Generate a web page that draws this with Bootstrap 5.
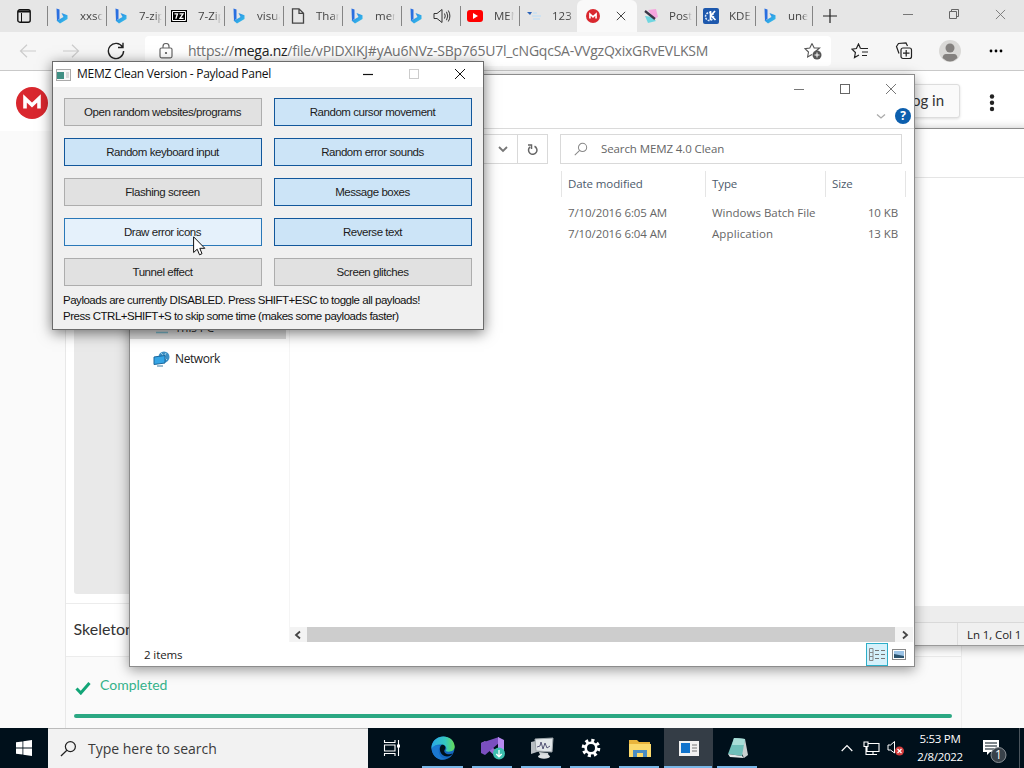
<!DOCTYPE html>
<html lang="en">
<head>
<meta charset="utf-8">
<title>Desktop</title>
<link rel="stylesheet" href="https://cdn.jsdelivr.net/npm/bootstrap@5.3.0/dist/css/bootstrap.min.css">
<script src="https://cdn.jsdelivr.net/npm/bootstrap@5.3.0/dist/js/bootstrap.bundle.min.js"></script>
<style>
body{width:1024px;height:768px;overflow:hidden;background:#fafafa;font-family:"Open Sans","Noto Sans",sans-serif;font-size:11.5px;line-height:16px;color:#222}
svg{display:block;flex:none}
.desk{width:1024px;height:768px}
.win{position:absolute;overflow:hidden}
/* browser */
.tabs{height:32px;background:#e6e6e6}
.tabs .lead-ico{width:47px;padding-left:17px}
.tab{width:59px;height:32px;padding-left:8px;gap:8px;position:relative}
.tab::before{content:"";width:1px;height:20px;background:#858585;position:absolute;left:0;top:6px}
.tab span{width:23px;overflow:hidden;white-space:nowrap;color:#444;margin-left:3px;-webkit-mask-image:linear-gradient(90deg,#000 70%,transparent)}
.tab.live{width:60px;background:#f9f9f9;border-radius:6px 6px 0 0;gap:17px;padding-left:9px}
.tab.bare::before,.tab.live::before{display:none}
.caps{gap:32px;color:#777}
.tools{height:39px;background:#f6f6f6;border-bottom:1px solid #c9c9c9}
.addr{width:686px;height:30px;background:#fff;border-radius:4px;margin-left:20px;padding-left:14px}
.url{font-size:14px;color:#717171;margin-left:15px;letter-spacing:-.23px;white-space:nowrap}
.url b{font-weight:400;color:#222}
/* site */
.site-head{height:60px;background:#fff}
.login{width:70px;height:34px;border:1px solid #ddd;border-radius:3px;background:#fafafa;font-family:Lato,"Open Sans",sans-serif;box-shadow:0 1px 3px #0002;font-size:15px;line-height:14px;color:#333}
.page{margin-left:65px;width:897px;height:597px;border-left:1px solid #e8e8e8;border-right:1px solid #eee;background:#fff}
.preview{margin-left:8px;width:880px;height:463px;background:#e9e9e9;border-radius:0 0 3px 3px}
.filename{margin-top:9px;height:53px;border-top:1px solid #ececec;font-family:Lato,sans-serif;font-size:16px;color:#333;padding:0 0 2px 7.5px}
.done{height:72px;border-top:1px solid #ececec;background:#fafafa;font-family:Lato,sans-serif;font-size:14px;color:#34b28a}
.bar{width:878px;height:4px;border-radius:2px;background:#2ba883;margin-left:8px}
/* notepad */
.notepad{left:700px;top:128px;width:330px;height:518px;background:#fff;border:1px solid #9a9a9a;border-top:1px solid #8c8c8c;box-shadow:0 2px 10px #0005}
.notepad .stat{height:23px;background:#f0f0f0;border-top:1px solid #d9d9d9}
/* explorer */
.explorer{left:129px;top:74px;width:786px;height:593px;background:#fff;border:1px solid #8c8c8c;box-shadow:0 3px 12px #0006}
.ribbon{height:54px;border-bottom:1px solid #dadada}
.box{height:30px;border:1px solid #d9d9d9}
.grey{color:#666}
.heads>div{border-left:1px solid #e5e5e5;height:26px;padding-left:6px;line-height:25px;color:#4c5a6b}
.c1{width:144px}.c2{width:120px}.c3{width:80px}
.rows>div{height:21px;line-height:21px}
.rows .c1,.rows .c2{padding-left:7px}
.seg{letter-spacing:-.1px}
/* panel */
.panel{left:52px;top:61px;width:432px;height:269px;background:#f0f0f0;border:1px solid #6b6b6b;box-shadow:0 3px 13px #0008}
.panel .cap{height:25px;background:#fff;color:#111;font-size:12px;letter-spacing:-.27px}
.pgrid{display:grid;grid-template-columns:198px 198px;column-gap:12px;row-gap:12px;padding:11px 0 0 11px}
.pay{height:28px;border:1px solid #adadad;background:#e1e1e1;font:11.5px/26px "Liberation Sans",sans-serif;letter-spacing:-.45px;text-align:center;padding:0 1px 0 0;color:#1c1c1c;border-radius:0}
.pay.on{background:#cce4f7;border-color:#12579b}
.pay.hot{background:#e5f1fb;border-color:#2a78b8}
.note{font:11.5px/16px "Liberation Sans",sans-serif;letter-spacing:-.48px;padding:6px 0 0 10px;color:#111;white-space:nowrap}
/* taskbar */
.task{left:0;top:728px;width:1024px;height:40px;background:#00101b;color:#fff}
.find{width:320px;height:40px;background:#f2f2f2;border-top:1px solid #bbb;color:#3b3b3b;font-size:14px}
.app{width:49px;height:40px;position:relative}
.app.run::after{content:"";position:absolute;left:4px;right:5px;bottom:0;height:2px;background:#79b7e8}
.app.sel{background:#343d46}
.app.sel::after{left:0;right:1px}
</style>
</head>
<body>
<svg width="0" height="0" class="position-absolute">
<defs>
<linearGradient id="bg" x1="0" y1="0" x2="1" y2="1"><stop offset="0" stop-color="#2b7be4"/><stop offset="1" stop-color="#35c8ea"/></linearGradient>
<symbol id="bing" viewBox="0 0 14 16"><path d="M1.500 0.500L4.500 1.600V10.500L2 13.200Z" fill="#2a6fe0"/><path d="M1.500 12.500L5 11L8.500 9L6.500 5L12.500 7.300V11L5 15.500Z" fill="url(#bg)"/></symbol>
<symbol id="x" viewBox="0 0 12 12"><path d="M1 1L11 11M11 1L1 11" fill="none" stroke="currentColor"/></symbol>
<symbol id="mega" viewBox="0 0 32 32"><circle cx="16" cy="16" r="16" fill="#d9272e"/><path d="M9 21.500V11.500L16 18L23 11.500V21.500" fill="none" stroke="#fff" stroke-width="3.600"/></symbol>
<symbol id="lens" viewBox="0 0 18 18"><circle cx="11" cy="7" r="5.300" fill="none" stroke="currentColor" stroke-width="1.300"/><path d="M7.300 10.800L1 17" stroke="currentColor" stroke-width="1.300"/></symbol>
</defs></svg>
<div class="desk position-relative overflow-hidden">

<div class="tabs d-flex align-items-center">
 <div class="lead-ico"><svg width="14" height="14" viewBox="0 0 14 14"><rect x=".8" y=".8" width="12.400" height="12.400" rx="2" fill="none" stroke="#111" stroke-width="1.400"/><path d="M1 2.500H13" stroke="#111" stroke-width="2"/><path d="M4.500 4V13" stroke="#111"/></svg></div>
 <div class="tab d-flex align-items-center"><svg width="14" height="16"><use href="#bing"/></svg><span>xxsc</span></div>
 <div class="tab d-flex align-items-center"><svg width="14" height="16"><use href="#bing"/></svg><span>7-zip</span></div>
 <div class="tab d-flex align-items-center"><svg width="16" height="12" viewBox="0 0 16 12" style="margin-left:-2px"><rect width="16" height="12"/><path d="M1.500 1.500H14.500V10.500H1.500Z" fill="none" stroke="#fff"/><path d="M3.500 3.800H6.500L4.800 8.800M8.500 3.800H12L9 8.300H12.500" fill="none" stroke="#fff" stroke-width="1.300"/></svg><span>7-Zip</span></div>
 <div class="tab d-flex align-items-center"><svg width="14" height="16"><use href="#bing"/></svg><span>visua</span></div>
 <div class="tab d-flex align-items-center"><svg width="14" height="16" viewBox="0 0 14 16"><path d="M1.500 .8H8L12.500 5.300V15.200H1.500ZM8 .8V5.300H12.500" fill="none" stroke="#444" stroke-width="1.300"/></svg><span>Than</span></div>
 <div class="tab d-flex align-items-center"><svg width="14" height="16"><use href="#bing"/></svg><span style="width:20px">mem</span></div>
 <div class="tab d-flex align-items-center"><svg width="14" height="16"><use href="#bing"/></svg><svg width="18" height="16" viewBox="0 0 18 16" style="margin-left:2px"><path d="M1 5.500H4L9 1.500V14.500L4 10.500H1ZM11.500 5.500Q13 8 11.500 10.500M13.500 3.800Q16 8 13.500 12.200M15.300 2.500Q18.500 8 15.300 13.500" fill="none" stroke="#333"/></svg></div>
 <div class="tab d-flex align-items-center"><svg width="16" height="12" viewBox="0 0 16 12" style="margin-left:-1px"><rect width="16" height="12" rx="3" fill="#f00"/><path d="M6 3L11 6L6 9Z" fill="#fff"/></svg><span style="width:20px">MEM</span></div>
 <div class="tab d-flex align-items-center" style="width:58px"><svg width="14" height="14" viewBox="0 0 14 14"><path d="M0 3H5L3 6Z" fill="#2a62b8"/><path d="M6 4H10M5 7H14M6 10H13" stroke="#cfe2f0" stroke-width="2"/></svg><span>123</span></div>
 <div class="tab live d-flex align-items-center"><svg width="14" height="14"><use href="#mega"/></svg><svg width="10" height="10" style="color:#222;margin-left:-1px"><use href="#x" width="10" height="10"/></svg></div>
 <div class="tab bare d-flex align-items-center" style="padding-left:7px"><svg width="14" height="16" viewBox="0 0 14 16"><path d="M4 2L12 1L14 9L10 11Z" fill="#f5a4dd"/><path d="M1 8L8 9L12 13L4 15Z" fill="#6fd6e0"/><path d="M1 3L11 11" stroke="#3a3546" stroke-width="2.300"/></svg><span>Post</span></div>
 <div class="tab d-flex align-items-center"><svg width="16" height="16" viewBox="0 0 16 16" style="margin-left:-1px"><rect width="16" height="16" rx="2" fill="#1d58ad"/><circle cx="6.500" cy="8.500" r="4" fill="none" stroke="#dbe9fa" stroke-width="1.500" stroke-dasharray="2 1"/><path d="M7.500 3V12M12 3L8 7.500L12.500 12" fill="none" stroke="#fff" stroke-width="1.700"/></svg><span style="margin-left:2px">KDE</span></div>
 <div class="tab d-flex align-items-center" style="width:57px"><svg width="14" height="16"><use href="#bing"/></svg><span style="width:20px">unet</span></div>
 <div class="tab d-flex align-items-center" style="width:30px;padding-left:11px"><svg width="14" height="14" viewBox="0 0 14 14"><path d="M7 0V14M0 7H14" stroke="#222" stroke-width="1.200"/></svg></div>
 <div class="caps d-flex align-items-center ms-auto" style="padding:0 18px 4px 0;gap:36px"><svg width="10" height="10"><path d="M0 5.500H10" stroke="#777"/></svg><svg width="10" height="10" viewBox="0 0 10 10"><path d="M.5 2.500H7.500V9.500H.5ZM2.500 2.500V.5H9.500V7.500H7.500" fill="none" stroke="#666"/></svg><svg width="11" height="11"><use href="#x" width="11" height="11"/></svg></div>
</div>

<div class="tools d-flex align-items-center">
 <svg width="18" height="14" viewBox="0 0 18 14" style="margin-left:19px"><path d="M17 7H1.500M8 .8L1.500 7L8 13.200" fill="none" stroke="#ccc" stroke-width="1.200"/></svg>
 <svg width="18" height="14" viewBox="0 0 18 14" style="margin-left:25px"><path d="M1 7H16.500M10 .8L16.500 7L10 13.200" fill="none" stroke="#ccc" stroke-width="1.200"/></svg>
 <svg width="18" height="18" viewBox="0 0 18 18" style="margin-left:27px"><path d="M15.500 5A7.600 7.600 0 1 0 16.600 9M16 .8V5.500H11" fill="none" stroke="#222" stroke-width="1.400"/></svg>
 <div class="addr d-flex align-items-center"><svg width="14" height="16" viewBox="0 0 14 16"><rect x="1" y="5" width="12" height="9.800" rx="1.500" fill="none" stroke="#666" stroke-width="1.200"/><path d="M4 5V3.500A3 3 0 0 1 10 3.500V5" fill="none" stroke="#666" stroke-width="1.200"/><circle cx="7" cy="10" r="1.100" fill="#555"/></svg><span class="url">https://<b>mega.nz</b>/file/vPIDXIKJ#yAu6NVz-SBp765U7l_cNGqcSA-VVgzQxixGRvEVLKSM</span>
 <svg width="18" height="18" viewBox="0 0 18 18" class="ms-auto" style="margin-right:9px"><path d="M8 1.500L10.200 6H15.500L11.500 9.500M8 1.500L5.800 6L1 6.600L4.500 10L3.600 15L8 12.600" fill="none" stroke="#555" stroke-width="1.100"/><circle cx="13" cy="13" r="4.500" fill="#555"/><path d="M13 10.500V15.500M10.500 13H15.500" stroke="#fff"/></svg></div>
 <svg width="18" height="16" viewBox="0 0 18 16" style="margin-left:20px"><path d="M9.500 5.500L7.500 1L5.400 5.500L1 6.200L4.400 9.500L3.500 14.500L8 12M9.500 5.500H17M11 9H17M11 12.500H16" fill="none" stroke="#222" stroke-width="1.200"/></svg>
 <svg width="18" height="18" viewBox="0 0 18 18" style="margin-left:26px"><path d="M4 11.500L1.500 4.500L3.500 1.500L11 1L12.500 4" fill="none" stroke="#222" stroke-width="1.200"/><rect x="6" y="6" width="10.500" height="10.500" rx="2" fill="none" stroke="#222" stroke-width="1.200"/><path d="M11.200 8V14.500M8 11.200H14.500" stroke="#222" stroke-width="1.200"/></svg>
 <svg width="22" height="22" viewBox="0 0 22 22" style="margin-left:26px"><circle cx="11" cy="11" r="11" fill="#dad9d7"/><circle cx="11" cy="8" r="4.500" fill="#84817f"/><path d="M3.500 18Q4 14 7 14H15Q18 14 18.500 18Q11 25 3.500 18Z" fill="#84817f"/></svg>
 <svg width="14" height="4" style="margin-left:28px"><circle cx="2" cy="2" r="1.400"/><circle cx="7" cy="2" r="1.400"/><circle cx="12" cy="2" r="1.400"/></svg>
</div>

<div class="site-head d-flex align-items-center">
 <svg width="32" height="32" style="margin:3px 0 0 16px"><use href="#mega"/></svg>
 <div class="login d-flex align-items-center justify-content-end ms-auto" style="padding:0 15px 2px 0">Log in</div>
 <svg width="6" height="18" style="margin:4px 29px 0 29px" fill="#222"><circle cx="3" cy="2.500" r="2.200"/><circle cx="3" cy="8.800" r="2.200"/><circle cx="3" cy="15" r="2.200"/></svg>
</div>
<div class="page"><div class="preview"></div>
 <div class="filename d-flex align-items-center">Skeleton.zip</div>
 <div class="done d-flex flex-column"><div class="d-flex" style="padding:20px 0 0 9px"><svg width="16" height="14" viewBox="0 0 16 14" style="margin-top:4px"><path d="M1.500 7.500L5.800 12L14.500 2" fill="none" stroke="#12a577" stroke-width="3"/></svg><span style="margin-left:9px">Completed</span></div>
 <div class="bar" style="margin-top:19px"></div></div></div>

<div class="win notepad d-flex flex-column">
 <div style="height:49px;border-bottom:1px solid #e5e5e5"></div><div class="flex-fill"></div>
 <div style="height:16px;background:#ededed"></div>
 <div class="stat d-flex align-items-center"><div style="border-left:1px solid #ddd;margin-left:256px;padding-left:9px;height:22px;line-height:24px;white-space:nowrap" class="seg">Ln 1, Col 1</div></div>
</div>

<div class="win explorer d-flex flex-column">
 <div class="ribbon d-flex flex-column align-items-end">
  <div class="d-flex align-items-center" style="gap:34px;padding:8px 17px 0 0;color:#777"><svg width="12" height="12"><path d="M1 6.500H11" stroke="#777"/></svg><svg width="12" height="12"><rect x="1.500" y="1.500" width="9" height="9" fill="none" stroke="#666"/></svg><svg width="12" height="12"><use href="#x" width="12" height="12"/></svg></div>
  <div class="d-flex align-items-center" style="gap:9px;padding:13px 3px 0 0"><svg width="10" height="7" viewBox="0 0 10 7"><path d="M1 1.500L5 5L9 1.500" fill="none" stroke="#aaa" stroke-width="1.300"/></svg><span class="rounded-circle d-flex align-items-center justify-content-center text-white fw-bold" style="width:16px;height:16px;background:#0c5fae;font-size:12px">?</span></div>
 </div>
 <div class="d-flex justify-content-end" style="padding:5px 12px 0 0">
  <div class="box d-flex align-items-center" style="width:260px"><svg width="10" height="7" viewBox="0 0 10 7" style="margin-left:209px"><path d="M1 1L5 5L9 1" fill="none" stroke="#777" stroke-width="1.800"/></svg><div style="border-left:1px solid #d9d9d9;height:28px;margin-left:9px;padding:8px 0 0 9px"><svg width="12" height="12" viewBox="0 0 12 12"><path d="M7.500 2.800A4.200 4.200 0 1 1 3 3.400M1 1.500H4.500V5.500" transform="translate(0 .5)" fill="none" stroke="#666" stroke-width="1.500"/></svg></div></div>
  <div class="box d-flex align-items-center grey" style="width:342px;margin-left:12px"><svg width="14" height="14" viewBox="0 0 18 18" style="margin-left:13px;color:#888"><use href="#lens"/></svg><span style="margin-left:13px" class="seg">Search MEMZ 4.0 Clean</span></div>
 </div>
 <div class="d-flex flex-fill">
  <div style="width:160px;padding-top:153px;border-right:1px solid #f5f5f5">
   <div class="d-flex align-items-center" style="height:22px;width:156px;background:#d9d9d9;padding-left:24px;margin-bottom:9px"><svg width="16" height="14" viewBox="0 0 16 14"><path d="M1 1H15V9H1Z" fill="#58b8e0"/><path d="M2 11.500H14" stroke="#7bb7c9" stroke-width="1.500"/></svg><span style="margin-left:5px">This PC</span></div>
   <div class="d-flex align-items-center" style="height:22px;padding-left:23px"><svg width="17" height="16" viewBox="0 0 17 16"><circle cx="11" cy="6" r="5.500" fill="#3c8fc4"/><path d="M8 2Q12 5 10 11M13 2Q10 6 14 9" stroke="#a8d4e8" fill="none"/><path d="M1 6L12 4.500V12L1 13.500Z" fill="#35a5e5" stroke="#1a679c"/><path d="M4 15H10" stroke="#3b7aa0"/></svg><span style="margin-left:5px;font-size:12px;letter-spacing:-.4px">Network</span></div>
  </div>
  <div class="flex-fill d-flex flex-column">
   <div style="margin-left:271px;padding-top:7px">
    <div class="heads d-flex seg"><div class="c1">Date modified</div><div class="c2">Type</div><div class="c3">Size</div><div></div></div>
    <div class="rows grey seg" style="padding-top:5px"><div class="d-flex"><div class="c1">7/10/2016 6:05 AM</div><div class="c2" style="letter-spacing:0">Windows Batch File</div><div class="text-end" style="width:73px">10 KB</div></div><div class="d-flex"><div class="c1">7/10/2016 6:04 AM</div><div class="c2" style="letter-spacing:.1px">Application</div><div class="text-end" style="width:73px">13 KB</div></div></div>
   </div>
   <div class="d-flex align-items-center mt-auto" style="height:15px;background:#f3f3f3;margin-right:1px"><svg width="17" height="10" viewBox="0 0 17 10"><path d="M10 1.500L6 5L10 8.500" fill="none" stroke="#444" stroke-width="1.800"/></svg><div style="width:588px;height:15px;background:#cdcdcd"></div><svg width="17" height="10" viewBox="0 0 17 10"><path d="M8 1.500L12 5L8 8.500" fill="none" stroke="#444" stroke-width="1.800"/></svg></div>
  </div>
 </div>
 <div class="d-flex align-items-center" style="height:24px;padding-left:14px"><span class="seg" style="padding-top:2px">2 items</span>
  <span class="ms-auto d-flex align-items-center justify-content-center" style="width:22px;height:23px;background:#d5f1fb;border:1px solid #2eaec8;margin-right:4px"><svg width="16" height="13" viewBox="0 0 16 13"><path d="M.5 .5H4V12.500H.5ZM.5 4.500H4M.5 8.500H4" fill="none" stroke="#888"/><path d="M6 2.500H16M6 6.500H16M6 10.500H16" stroke="#777" stroke-dasharray="4 2"/></svg></span>
  <svg width="14" height="11" viewBox="0 0 14 11" style="margin-right:8px"><rect x=".5" y=".5" width="13" height="10" fill="#fff" stroke="#888"/><path d="M2 2H12V9H2Z" fill="#9bc3e6"/><path d="M2 5L7 6L12 7V9H2Z" fill="#2b536e"/></svg></div>
</div>

<div class="win panel">
 <div class="cap d-flex align-items-center">
  <svg width="15" height="12" viewBox="0 0 15 12" style="margin-left:3px"><rect x=".5" y=".5" width="14" height="11" fill="#f7f7f7" stroke="#aaa"/><path d="M1 3H8V10H1Z" fill="#3f8f83"/><path d="M10 4H13M10 6H13M10 8H13" stroke="#bbb"/></svg>
  <span style="margin:-2px 0 0 6px">MEMZ Clean Version - Payload Panel</span>
  <div class="d-flex align-items-center ms-auto" style="gap:34px;padding:0 17px 2px 0"><svg width="12" height="12"><path d="M1 6.500H11" stroke="#111" stroke-width="1.200"/></svg><svg width="12" height="12"><rect x="1.500" y="1.500" width="9" height="9" fill="none" stroke="#ccc"/></svg><svg width="12" height="12"><use href="#x" width="12" height="12"/></svg></div>
 </div>
 <div class="pgrid">
  <button class="btn pay">Open random websites/programs</button><button class="btn pay on">Random cursor movement</button>
  <button class="btn pay on">Random keyboard input</button><button class="btn pay on">Random error sounds</button>
  <button class="btn pay">Flashing screen</button><button class="btn pay on">Message boxes</button>
  <button class="btn pay hot">Draw error icons</button><button class="btn pay on">Reverse text</button>
  <button class="btn pay">Tunnel effect</button><button class="btn pay">Screen glitches</button>
 </div>
 <div class="note"><div>Payloads are currently DISABLED. Press SHIFT+ESC to toggle all payloads!</div><div>Press CTRL+SHIFT+S to skip some time (makes some payloads faster)</div></div>
</div>
<svg class="position-absolute" style="left:193px;top:236px" width="13" height="20" viewBox="0 0 13 20"><path d="M.6 .8V16.500L4.200 13.200L6.500 18.800L9 17.700L6.800 12.300H11.800Z" fill="#fff" stroke="#111"/></svg>

<div class="win task d-flex">
 <div class="d-flex align-items-center justify-content-center" style="width:48px"><svg width="16" height="16" viewBox="0 0 16 16" fill="#fff"><path d="M0 2.300L6.500 1.400V7.500H0ZM7.300 1.200L16 0V7.500H7.300ZM0 8.400H6.500V14.600L0 13.700ZM7.300 8.400H16V16L7.300 14.700Z"/></svg></div>
 <div class="find d-flex align-items-center"><svg width="17" height="17" viewBox="0 0 18 18" style="margin-left:12px;color:#222"><use href="#lens"/></svg><span style="margin-left:11px">Type here to search</span></div>
 <div class="app d-flex align-items-center justify-content-center" style="width:50px;padding-right:2px"><svg width="18" height="16" viewBox="0 0 18 16"><path d="M1.500 0V2.500H12V0M1.500 16V13.500H12V16M1.500 5H12V11H1.500ZM15.500 0V16" fill="none" stroke="#fff" stroke-width="1.100"/><rect x="14" y="4.500" width="3" height="3" fill="#fff"/></svg></div>
 <div class="app run d-flex align-items-center justify-content-center" style="width:50px"><svg width="24" height="24" viewBox="0 0 24 24"><defs><linearGradient id="eg"><stop offset="0" stop-color="#2aa8e6"/><stop offset=".6" stop-color="#35c8c0"/><stop offset="1" stop-color="#66dc55"/></linearGradient></defs><circle cx="12" cy="12" r="11.500" fill="#1467c0"/><path d="M.5 11C2-3 23-3 23.700 10.500C24 15 18 17 14.500 15C16.500 12.500 15 9 11 8.500C6 8 2 10 .5 13Z" fill="url(#eg)"/><path d="M10.500 9C7 12 9 20 16 20.500C19 20.500 21 18.500 21.500 17.500C17 19.500 12 17 13.500 14C16 11 13 8 10.500 9Z" fill="#00101b"/><path d="M9 10C6 14 8 23 15 22.800C8 26 1 20 .7 13C2 10 6 8 9 10Z" fill="#1b78d0"/></svg></div>
 <div class="app run d-flex align-items-center justify-content-center"><svg width="26" height="24" viewBox="0 0 26 24"><path d="M1 7L5 5L19 17V22L16 21Z" fill="#9b6bd3"/><path d="M1 7V17L5 19L19 7V1L16 2Z" fill="#7a4fc0"/><path d="M18 1L24 4V20L18 23Z" fill="#b78af0"/><circle cx="19" cy="17.500" r="6" fill="#3cbfae"/><path d="M19 14V20.500M16.300 18L19 20.800L21.700 18" fill="none" stroke="#fff" stroke-width="1.300"/></svg></div>
 <div class="app run d-flex align-items-center justify-content-center"><svg width="24" height="22" viewBox="0 0 24 22"><path d="M1 5L10 3V14L1 17Z" fill="#b7bec3"/><path d="M5 2L23 1L22 15L6 14Z" fill="#e2e7ea" stroke="#9da5aa"/><path d="M7 10L10 9L11 5L13 12L15 6L17 11L20 9" fill="none" stroke="#557"/><path d="M9 15L18 16L19 20L11 21Z" fill="#cfd4d6"/><ellipse cx="14" cy="19.500" rx="6" ry="2.200" fill="#dce0e2"/></svg></div>
 <div class="app run d-flex align-items-center justify-content-center"><svg width="20" height="20" viewBox="0 0 20 20"><circle cx="10" cy="10" r="7.300" fill="none" stroke="#fff" stroke-width="4" stroke-dasharray="2.870 2.870"/><circle cx="10" cy="10" r="5.300" fill="none" stroke="#fff" stroke-width="2.600"/></svg></div>
 <div class="app run d-flex align-items-center justify-content-center"><svg width="22" height="19" viewBox="0 0 22 19"><path d="M0 1H8L10 3H21V17H0Z" fill="#e9b43c"/><path d="M0 5H22V18H0Z" fill="#fbd96c"/><path d="M4 18V11H18V18H14V14H8V18Z" fill="#4a8dc4"/></svg></div>
 <div class="app run sel d-flex align-items-center justify-content-center"><svg width="20" height="15" viewBox="0 0 20 15"><rect width="20" height="15" fill="#f2f2f2"/><path d="M2 2H11V12H2Z" fill="#1274cc"/><path d="M13 4H18M13 7H18M13 10H18" stroke="#777"/></svg></div>
 <div class="app run d-flex align-items-center justify-content-center"><svg width="22" height="22" viewBox="0 0 22 22"><path d="M7 1L18 2L21 18L17 21Z" fill="#c9d0d0"/><path d="M7 1L18 2L15 19L1 17Z" fill="#6fbfb9"/><path d="M7 1L18 2L16.800 8L5 8Z" fill="#a9ddd7"/><path d="M1 17L15 19L17 21L3 20Z" fill="#e5eaea"/></svg></div>
 <div class="ms-auto d-flex align-items-center">
  <svg width="12" height="8" viewBox="0 0 12 8"><path d="M.7 7L6 1.500L11.300 7" fill="none" stroke="#fff" stroke-width="1.200"/></svg>
  <svg width="17" height="15" viewBox="0 0 17 15" style="margin-left:10px"><path d="M5.500 2.500H16V10.500H4V6M1 1H5V5.500H1ZM3 5.500V13.500H6M10 10.500V13.500M6 13.500H14" fill="none" stroke="#fff" stroke-width="1.100"/></svg>
  <svg width="18" height="16" viewBox="0 0 18 16" style="margin-left:7px"><path d="M1 5H3.500L7.500 1.500V13L3.500 10H1Z" fill="none" stroke="#fff"/><circle cx="12.500" cy="11" r="4.500" fill="#d43c3c"/><path d="M10.500 9L14.500 13M14.500 9L10.500 13" stroke="#fff" stroke-width="1.200"/></svg>
  <div class="text-center" style="width:70px;line-height:18px;letter-spacing:-.3px;padding-bottom:1px;font-size:11.5px">5:53 PM<br>2/8/2022</div>
  <div class="position-relative" style="width:49px;height:40px"><svg width="26" height="26" viewBox="0 0 26 26" style="margin:11px 0 0 7px"><path d="M1 1H17V13H8L5 16V13H1Z" fill="#fff"/><path d="M3 4H15M3 7H15M3 10H12" stroke="#00101b" stroke-width="1.100"/><circle cx="16.500" cy="16" r="7.500" fill="#39424a" stroke="#8a9096"/><text x="16.500" y="20.300" text-anchor="middle" font-size="12" fill="#fff">1</text></svg><div class="position-absolute" style="right:4px;top:0;width:1px;height:40px;background:#4a545c"></div></div>
 </div>
</div>
</div>
</body>
</html>
